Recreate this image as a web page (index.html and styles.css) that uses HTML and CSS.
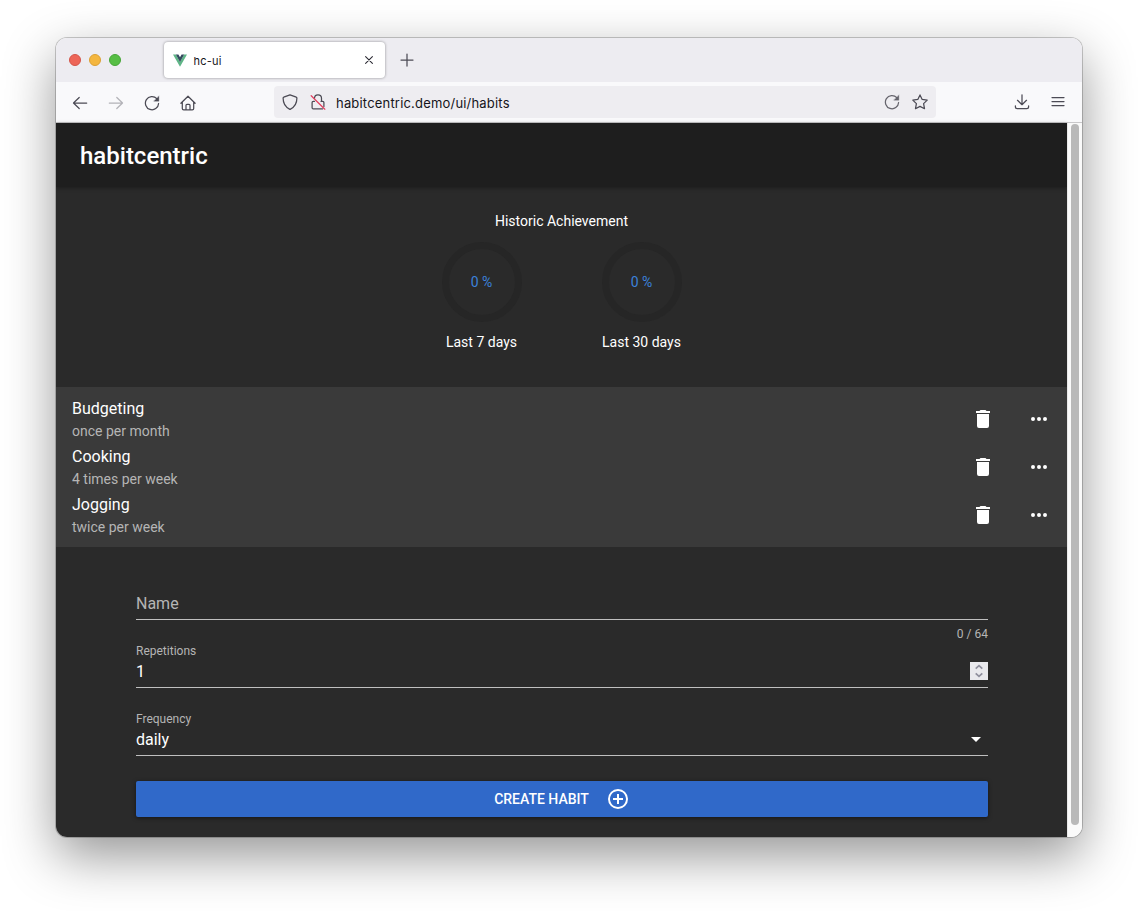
FILE: index.html
```html
<!DOCTYPE html>
<html lang="en">
<head>
<meta charset="utf-8">
<title>hc-ui</title>
<link rel="stylesheet" href="styles.css">
</head>
<body>
<div class="window">
  <div class="tabbar">
    <div class="lights"><i class="light red"></i><i class="light yellow"></i><i class="light green"></i></div>
    <div class="tab">
      <svg class="vue" width="14" height="13" viewBox="0 0 14 13"><path fill="#5fb587" d="M0 .5h2.800L7 7.700 11.200.5H14L7 12.700z"/><path fill="#34495e" d="M2.800.5h2.600L7 3.300 8.600.5h2.600L7 7.900z"/></svg>
      <span class="tab-title">hc-ui</span>
      <svg width="10" height="10" viewBox="0 0 10 10" class="line dark"><path d="M1.600 1.600l6.800 6.800M8.400 1.600L1.600 8.400"/></svg>
    </div>
    <svg width="14" height="14" viewBox="0 0 14 14" class="line plus"><path d="M7 1v12M1 7h12"/></svg>
  </div>
  <div class="navbar">
    <div class="nav-left">
      <svg width="16" height="16" viewBox="0 0 16 16" class="line"><path d="M14.700 8H1.700M7.200 2.500L1.500 8l5.700 5.500"/></svg>
      <svg width="16" height="16" viewBox="0 0 16 16" class="line faded"><path d="M1.300 8h13M8.800 2.500L14.500 8l-5.700 5.500"/></svg>
      <svg width="16" height="16" viewBox="0 0 16 16" class="line"><path d="M12.800 3.600A6.600 6.600 0 1 0 14.600 8.500"/><path class="solid" d="M14.900 1.200v5H9.900z"/></svg>
      <svg width="16" height="16" viewBox="0 0 16 16" class="line"><path d="M.9 8.300L8 1.200l7.100 7.100M2.300 7.200v6.300q0 1.400 1.400 1.400h8.600q1.400 0 1.400-1.400V7.200M6 14.900V10.300q0-1 1-1h2q1 0 1 1v4.600"/></svg>
    </div>
    <div class="urlbar">
      <svg width="16" height="16" viewBox="0 0 16 16" class="line"><path d="M8 .8L14.300 3.200q.6.300.6.900C14.900 9 12.400 13.200 8.500 15.100q-.5.300-1 0C3.600 13.200 1.100 9 1.100 4.100q0-.6.600-.9z"/></svg>
      <svg width="16" height="16" viewBox="0 0 16 16" class="line lock"><path d="M4.500 4.300A3.500 3.500 0 0 1 11.500 4.200V7.300M11 7.300h1.700q1.200 0 1.200 1.200v4M4.500 7.300H3.300q-1.200 0-1.200 1.200v5.200q0 1.200 1.200 1.200h9.200"/><path class="strike" d="M1.200 1.700l13.600 13.500"/></svg>
      <span class="url">habitcentric.demo/ui/habits</span>
      <svg width="16" height="16" viewBox="0 0 16 16" class="line soft"><path d="M12.800 3.600A6.600 6.600 0 1 0 14.600 8.500"/><path class="solid" d="M14.900 1.200v5H9.900z"/></svg>
      <svg width="16" height="16" viewBox="0 0 16 16" class="line"><path d="M8 .9l2.200 4.500 5 .7-3.600 3.500.9 5.100L8 12.400l-4.500 2.300.9-5.100L.8 6.100l5-.7z"/></svg>
    </div>
    <div class="nav-right">
      <svg width="16" height="16" viewBox="0 0 16 16" class="line"><path d="M8 .8v9.700M3.500 6.300L8 10.700l4.500-4.400M1.400 11.800v1q0 1.900 1.900 1.900h9.400q1.900 0 1.900-1.900v-1"/></svg>
      <svg width="16" height="16" viewBox="0 0 16 16" class="line"><path d="M2 3.500h12M2 7.500h12M2 11.500h12"/></svg>
    </div>
  </div>
  <div class="viewport">
    <main class="app">
      <header class="appbar"><h1>habitcentric</h1></header>
      <section class="history">
        <h2>Historic Achievement</h2>
        <div class="gauges">
          <div class="gauge"><div class="ring">0 %</div><span>Last 7 days</span></div>
          <div class="gauge"><div class="ring">0 %</div><span>Last 30 days</span></div>
        </div>
      </section>
      <ul class="habits">
        <li><div class="habit"><b>Budgeting</b><small>once per month</small></div>
          <svg class="icon" viewBox="0 0 24 24"><path d="M19 4h-3.500l-1-1h-5l-1 1H5v2h14M6 19a2 2 0 0 0 2 2h8a2 2 0 0 0 2-2V7H6v12z"/></svg>
          <svg class="icon" viewBox="0 0 24 24"><path d="M16 12a2 2 0 0 1 2-2 2 2 0 0 1 2 2 2 2 0 0 1-2 2 2 2 0 0 1-2-2m-6 0a2 2 0 0 1 2-2 2 2 0 0 1 2 2 2 2 0 0 1-2 2 2 2 0 0 1-2-2m-6 0a2 2 0 0 1 2-2 2 2 0 0 1 2 2 2 2 0 0 1-2 2 2 2 0 0 1-2-2z"/></svg></li>
        <li><div class="habit"><b>Cooking</b><small>4 times per week</small></div>
          <svg class="icon" viewBox="0 0 24 24"><path d="M19 4h-3.500l-1-1h-5l-1 1H5v2h14M6 19a2 2 0 0 0 2 2h8a2 2 0 0 0 2-2V7H6v12z"/></svg>
          <svg class="icon" viewBox="0 0 24 24"><path d="M16 12a2 2 0 0 1 2-2 2 2 0 0 1 2 2 2 2 0 0 1-2 2 2 2 0 0 1-2-2m-6 0a2 2 0 0 1 2-2 2 2 0 0 1 2 2 2 2 0 0 1-2 2 2 2 0 0 1-2-2m-6 0a2 2 0 0 1 2-2 2 2 0 0 1 2 2 2 2 0 0 1-2 2 2 2 0 0 1-2-2z"/></svg></li>
        <li><div class="habit"><b>Jogging</b><small>twice per week</small></div>
          <svg class="icon" viewBox="0 0 24 24"><path d="M19 4h-3.500l-1-1h-5l-1 1H5v2h14M6 19a2 2 0 0 0 2 2h8a2 2 0 0 0 2-2V7H6v12z"/></svg>
          <svg class="icon" viewBox="0 0 24 24"><path d="M16 12a2 2 0 0 1 2-2 2 2 0 0 1 2 2 2 2 0 0 1-2 2 2 2 0 0 1-2-2m-6 0a2 2 0 0 1 2-2 2 2 0 0 1 2 2 2 2 0 0 1-2 2 2 2 0 0 1-2-2m-6 0a2 2 0 0 1 2-2 2 2 0 0 1 2 2 2 2 0 0 1-2 2 2 2 0 0 1-2-2z"/></svg></li>
      </ul>
      <form class="form">
        <div class="field name"><span class="placeholder">Name</span></div>
        <div class="counter">0 / 64</div>
        <div class="label">Repetitions</div>
        <div class="field"><span>1</span>
          <svg class="spinner" width="18" height="18" viewBox="0 0 18 18"><path d="M5.700 6.700L9 3.700l3.300 3M5.700 11.300l3.300 3 3.300-3"/></svg></div>
        <div class="label second">Frequency</div>
        <div class="field"><span>daily</span>
          <svg class="icon caret" viewBox="0 0 24 24"><path d="M7 10l5 5 5-5z"/></svg></div>
        <button type="button" class="create">CREATE HABIT
          <svg class="icon" viewBox="0 0 24 24"><path d="M12 20c-4.410 0-8-3.590-8-8s3.590-8 8-8 8 3.590 8 8-3.590 8-8 8m0-18A10 10 0 0 0 2 12a10 10 0 0 0 10 10 10 10 0 0 0 10-10A10 10 0 0 0 12 2m1 5h-2v4H7v2h4v4h2v-4h4v-2h-4V7z"/></svg></button>
      </form>
    </main>
    <div class="scrollbar"><div class="thumb"></div></div>
  </div>
</div>
</body>
</html>
```
FILE: styles.css
```css
* { box-sizing: border-box; }
body { margin: 0; padding: 38px 56px 0; height: 911px; overflow: hidden; background: #fff; font-family: Roboto, sans-serif; }
svg { display: block; flex: none; }
.window { width: 1026px; height: 799px; border-radius: 11px; overflow: hidden; box-shadow: 0 0 0 1px rgba(0,0,0,.2), 0 19px 52px rgba(0,0,0,.42); }

.tabbar { height: 44px; background: #edecf1; display: flex; align-items: center; }
.lights { display: flex; gap: 8px; padding-left: 13px; width: 108px; }
.light { width: 12px; height: 12px; border-radius: 50%; }
.red { background: #ed6558; border: 1px solid #d45549; }
.yellow { background: #f4b63f; border: 1px solid #dca033; }
.green { background: #57be45; border: 1px solid #47a637; }
.tab { width: 221px; height: 36px; background: #fff; border-radius: 4px; box-shadow: 0 0 3px rgba(0,0,0,.4); display: flex; align-items: center; padding: 0 11px 0 9px; }
.tab-title { flex: 1; padding: 2px 0 0 6.500px; font: 11px Inter, sans-serif; letter-spacing: .2px; color: #15141a; }
.line { fill: none; stroke: #4c4b55; stroke-width: 1.25; stroke-linecap: round; stroke-linejoin: round; }
.line .solid { fill: #4c4b55; stroke-width: .3; }
.line.soft { stroke: #66656d; }
.line.soft .solid { fill: #66656d; }
.line .strike { stroke: #e2405f; }
.line.dark { stroke: #2b2a33; stroke-width: 1.1; }
.faded { opacity: .4; }
.plus { margin: 0 0 0 14.500px; }

.navbar { height: 41px; background: #f9f9fb; border-bottom: 1px solid #c9c8ca; display: flex; align-items: center; }
.nav-left { display: flex; gap: 20px; padding: 1px 0 0 16px; width: 218px; }
.urlbar { width: 662px; height: 32px; background: #eeedf1; border-radius: 4px; display: flex; align-items: center; gap: 12px; padding: 0 8px; }
.url { flex: 1; margin-left: -2px; padding-top: 2px; font: 13px Inter, sans-serif; letter-spacing: .19px; color: #15141a; }
.nav-right { display: flex; gap: 20px; padding-left: 78px; }

.viewport { display: flex; height: 714px; }
.app { width: 1011px; background: #2a2a2a; color: #fff; }
.scrollbar { width: 15px; background: #fafafa; border-left: 1px solid #e8e8e8; padding: 1px 3px 0; }
.thumb { width: 8px; height: 701px; border-radius: 4px; background: #b9b9b9; }
.appbar { height: 64px; background: #1e1e1e; display: flex; align-items: center; padding: 2px 24px 0; box-shadow: 0 1px 4px rgba(0,0,0,.35); }
.appbar h1 { margin: 0; font-size: 24px; font-weight: 500; line-height: 32px; }
.history { height: 200px; padding-top: 24px; text-align: center; font-size: 14px; line-height: 20px; }
.history h2 { margin: 0; font: inherit; }
.gauges { display: flex; justify-content: center; padding-top: 11px; }
.gauge { width: 160px; display: flex; flex-direction: column; align-items: center; gap: 10px; }
.ring { width: 80px; height: 80px; border: 7px solid #262626; border-radius: 50%; display: flex; align-items: center; justify-content: center; color: #3c82dc; }

.habits { list-style: none; margin: 0; padding: 8px 16px; height: 160px; background: #3a3a3a; }
.habits li { height: 48px; display: flex; align-items: center; gap: 32px; }
.habit { flex: 1; display: flex; flex-direction: column; }
.habit b { font-size: 16px; font-weight: 400; line-height: 24px; }
.habit small { font-size: 14px; line-height: 20px; color: #b5b5b5; }
.icon { width: 24px; height: 24px; fill: #fff; }

.form { width: 852px; margin-left: 80px; padding-top: 40px; }
.field { height: 28px; border-bottom: 1px solid #bfbfbf; display: flex; align-items: center; justify-content: space-between; font-size: 16px; padding-bottom: 4px; }
.name { height: 33px; padding-bottom: 0; }
.placeholder { color: #b5b5b5; }
.counter { height: 24px; line-height: 28px; font-size: 12px; text-align: right; color: #b5b5b5; }
.label { height: 16px; line-height: 14px; font-size: 12px; color: #b5b5b5; }
.second { margin-top: 24px; }
.spinner { margin-bottom: 1px; background: #e9e9ed; fill: none; stroke: #8f8f9d; stroke-width: 1.7; }
.caret { margin: 0 .500px 1px 0; }
.create { width: 100%; height: 36px; margin: 25px 0 0; padding: 0; border: 0; border-radius: 2px; background: #3069c9; color: #fff; font: 500 14px Roboto, sans-serif; display: flex; align-items: center; justify-content: center; gap: 17px; box-shadow: 0 1px 4px rgba(0,0,0,.5); }
```
